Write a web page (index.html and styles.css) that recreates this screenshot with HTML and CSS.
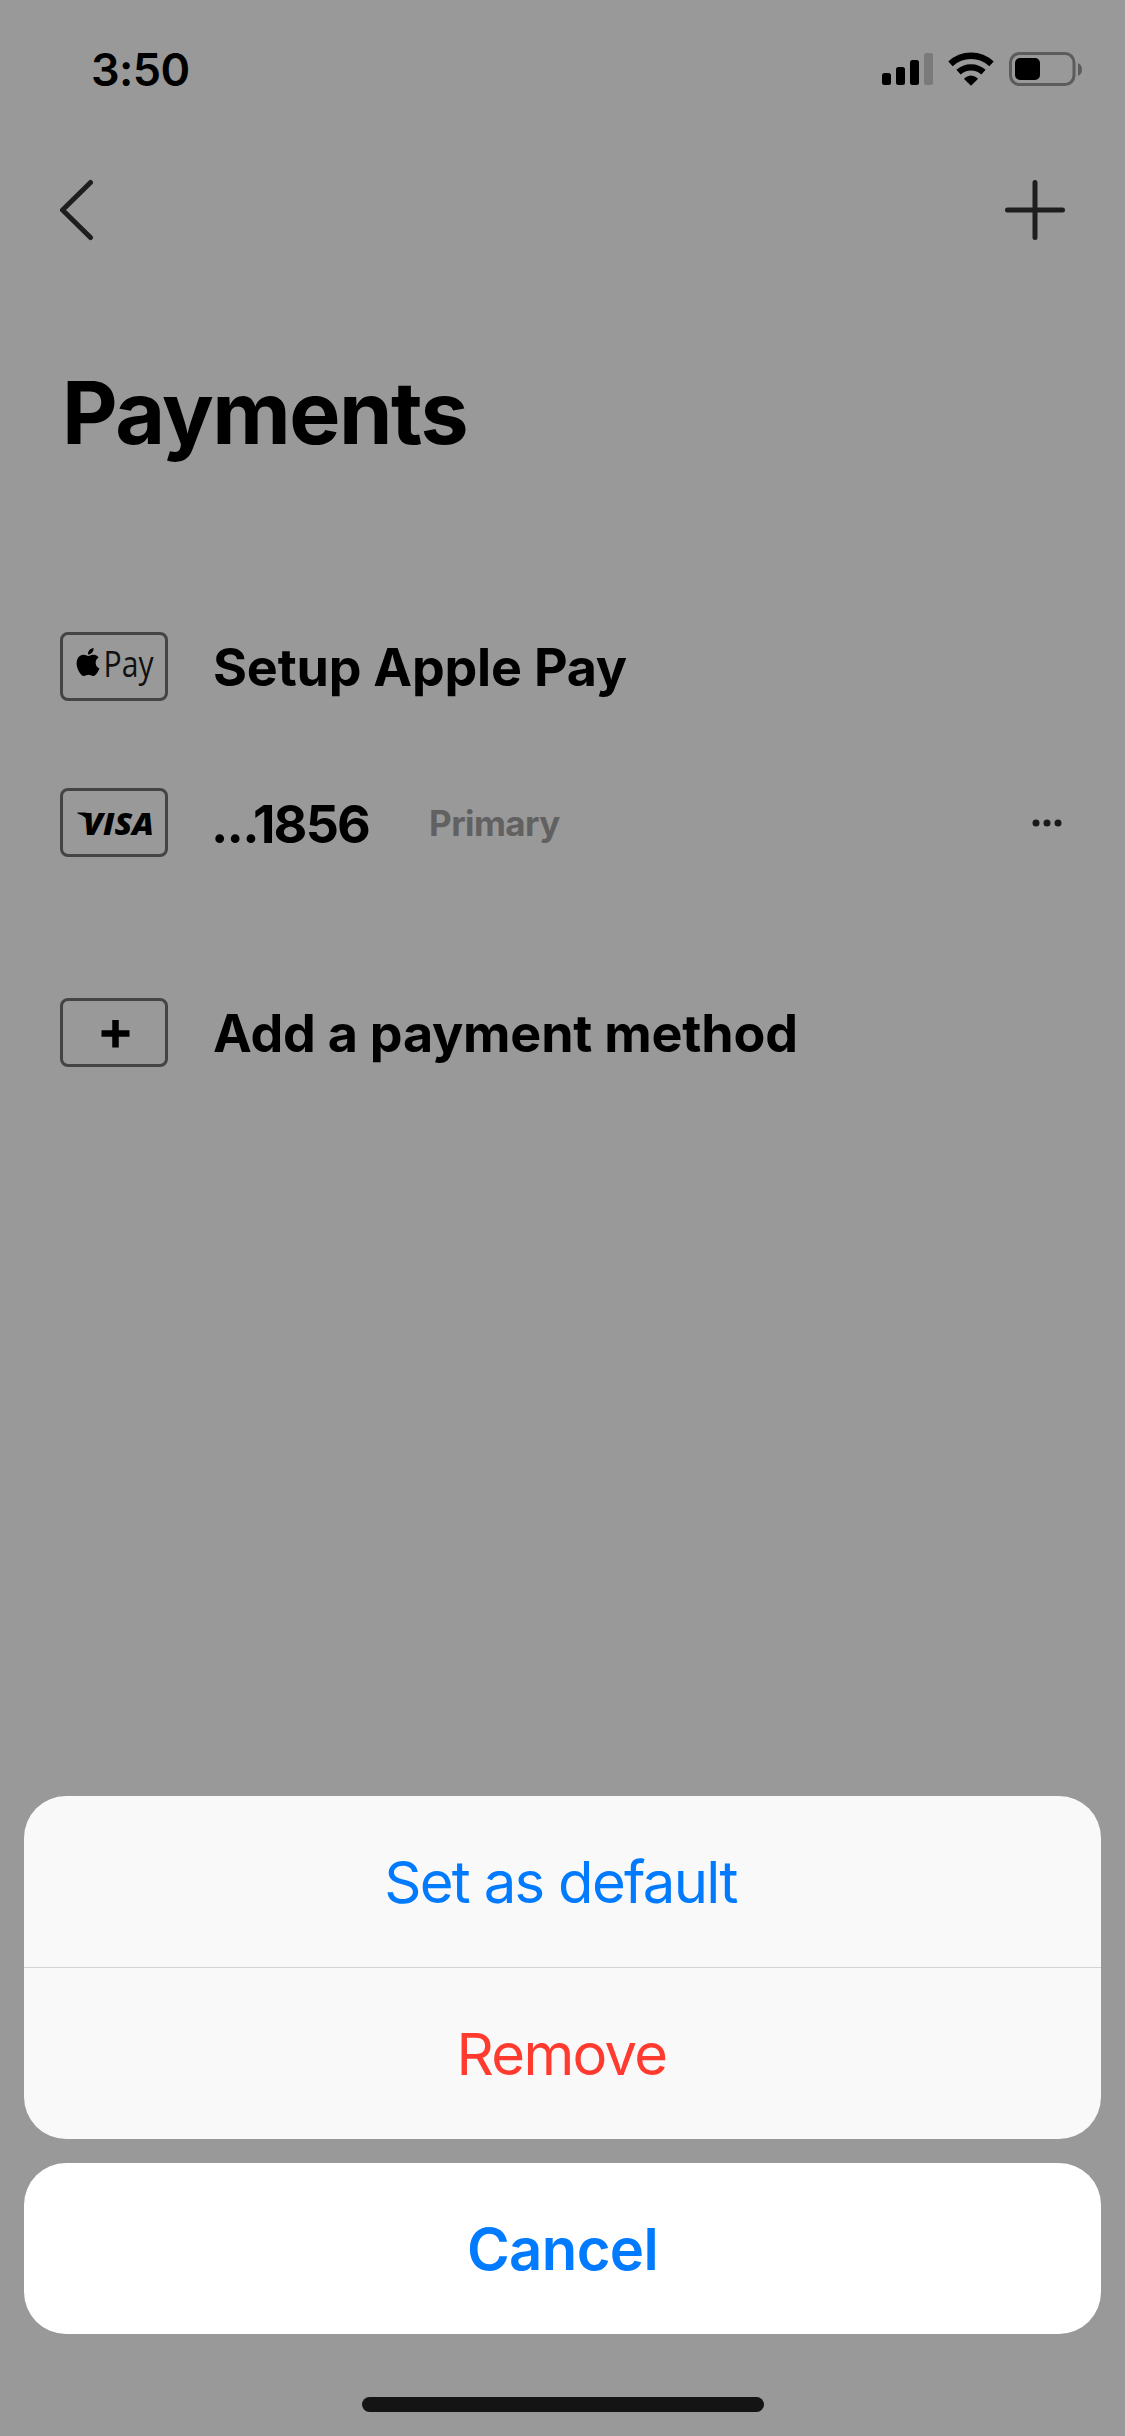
FILE: index.html
```html
<!DOCTYPE html>
<html lang="en">
<head>
<meta charset="utf-8">
<title>Payments</title>
<link rel="stylesheet" href="styles.css">
</head>
<body>
<div class="screen">
  <header class="status">
    <span class="time">3:50</span>
    <svg class="indicators" width="202" height="36" viewBox="0 0 202 36">
      <rect x="1" y="22" width="9" height="12" rx="2.5"/>
      <rect x="15" y="16" width="9" height="18" rx="2.5"/>
      <rect x="29" y="9" width="9" height="25" rx="2.5"/>
      <rect x="43" y="2" width="9" height="32" rx="2.5" fill="#7a7a7a"/>
      <g fill="none" stroke="#000" stroke-width="6.4">
        <path d="M69.500 12.800A30 30 0 0 1 110.500 12.800"/>
        <path d="M77.500 21.200A18.500 18.500 0 0 1 102.500 21.200"/>
      </g>
      <path d="M83.400 27.200Q90 21.600 96.600 27.200Q97 28 96.400 28.600L90 34.800L83.600 28.600Q83 28 83.400 27.200Z"/>
      <rect x="129.500" y="2.500" width="63.500" height="31" rx="9" fill="none" stroke="#5c5c5c" stroke-width="3"/>
      <rect x="134" y="7" width="25" height="22" rx="5"/>
      <path d="M197 12q4 2 4 6.500t-4 6.500z" fill="#5c5c5c"/>
    </svg>
  </header>
  <nav class="nav">
    <svg width="36" height="64" viewBox="0 0 36 64"><path class="line" d="M32.500 4.500L4.500 32L32.500 59.500"/></svg>
    <svg width="64" height="64" viewBox="0 0 64 64"><path class="line" d="M32 4.500V59.500M4.500 32H59.500"/></svg>
  </nav>
  <main class="content">
    <h1 class="title">Payments</h1>
    <ul class="methods">
      <li class="row">
        <svg class="card" width="108" height="69" viewBox="0 0 108 69">
          <rect class="edge" x="1.500" y="1.500" width="105" height="66" rx="6.500"/>
          <path transform="translate(14 16) scale(1.167)" d="M12.152 6.896c-.948 0-2.415-1.078-3.960-1.040-2.040.027-3.910 1.183-4.961 3.014-2.117 3.675-.546 9.103 1.519 12.090 1.013 1.454 2.208 3.090 3.792 3.039 1.520-.065 2.090-.987 3.935-.987 1.831 0 2.350.987 3.960.948 1.637-.026 2.676-1.480 3.676-2.948 1.156-1.688 1.636-3.325 1.662-3.415-.039-.013-3.182-1.221-3.220-4.857-.026-3.040 2.480-4.494 2.597-4.559-1.429-2.090-3.623-2.324-4.390-2.376-2-.156-3.675 1.090-4.610 1.090zM15.530 3.830c.843-1.012 1.400-2.427 1.245-3.830-1.207.052-2.662.805-3.532 1.818-.780.896-1.454 2.338-1.273 3.714 1.338.104 2.715-.688 3.559-1.701"/>
          <text class="pay" x="43.500" y="44.500" textLength="50" lengthAdjust="spacingAndGlyphs">Pay</text>
        </svg>
        <span class="label label-apple">Setup Apple Pay</span>
      </li>
      <li class="row">
        <svg class="card" width="108" height="69" viewBox="0 0 108 69">
          <rect class="edge" x="1.500" y="1.500" width="105" height="66" rx="6.500"/>
          <path d="M17.500 24.500H26L32 39Q27 28 17.500 25.500Z"/>
          <text class="visa" x="23" y="46.500" textLength="71" lengthAdjust="spacingAndGlyphs">VISA</text>
        </svg>
        <span class="label label-number">...1856</span>
        <span class="tag">Primary</span>
        <svg class="more" width="30" height="8" viewBox="0 0 30 8"><circle cx="4" cy="4" r="3.500"/><circle cx="15" cy="4" r="3.500"/><circle cx="26" cy="4" r="3.500"/></svg>
      </li>
      <li class="row row-add">
        <svg class="card" width="108" height="69" viewBox="0 0 108 69">
          <rect class="edge" x="1.500" y="1.500" width="105" height="66" rx="6.500"/>
          <path d="M55.500 22V49.500M41.500 35.500H69.500" stroke="#000" stroke-width="6.500"/>
        </svg>
        <span class="label label-add">Add a payment method</span>
      </li>
    </ul>
  </main>
  <div class="sheet">
    <div class="group">
      <button class="action set">Set as default</button>
      <button class="action remove">Remove</button>
    </div>
    <button class="action cancel">Cancel</button>
    <div class="home"></div>
  </div>
</div>
</body>
</html>
```
FILE: styles.css
```css
* { box-sizing: border-box; }
body { margin: 0; background: #999; }
.screen {
  position: relative;
  width: 1125px;
  height: 2436px;
  overflow: hidden;
  background: #999;
  color: #000;
  font-family: Inter, "Liberation Sans", sans-serif;
}
svg { display: block; flex: none; }
.status {
  display: flex;
  justify-content: space-between;
  align-items: flex-start;
  height: 178px;
  padding: 51px 42px 0 91px;
}
.time { font-size: 45px; line-height: 37px; font-weight: 600; letter-spacing: -0.6px; }
.nav {
  display: flex;
  justify-content: space-between;
  height: 64px;
  padding: 0 58px;
}
.line { fill: none; stroke: #1e1e1e; stroke-width: 5; stroke-linecap: round; stroke-linejoin: round; }
.content { padding: 122px 60px 0; }
.title { margin: 0; padding-left: 2px; font-size: 86px; line-height: 98px; font-weight: 700; letter-spacing: -1.5px; white-space: nowrap; }
.methods { list-style: none; margin: 170px 0 0; padding: 0; }
.row { display: flex; align-items: center; height: 69px; margin-bottom: 87px; }
.row-add { margin-top: 141px; }
.edge { fill: none; stroke: #444; stroke-width: 3; }
.pay { font: 400 36px "Open Sans", sans-serif; fill: #111; }
.visa { font: italic 800 30px "Open Sans", sans-serif; }
.label { margin-left: 45px; padding-top: 2px; font-size: 52px; line-height: 69px; font-weight: 700; letter-spacing: -0.2px; white-space: nowrap; }
.label-number { margin-left: 43px; padding-top: 3px; letter-spacing: -1.8px; }
.tag { margin-left: 60px; padding-top: 1px; font-size: 35px; line-height: 69px; font-weight: 700; letter-spacing: -0.6px; color: #616161; }
.more { margin: 0 3px 0 auto; fill: #1a1a1a; }
.sheet { position: absolute; left: 24px; right: 24px; bottom: 24px; display: flex; flex-direction: column; }
.group { display: flex; flex-direction: column; height: 343px; border-radius: 42px; overflow: hidden; background: #f9f9f9; }
.action {
  flex: 1;
  border: 0;
  padding: 2px 2px 0 0;
  background: none;
  font-family: inherit;
  font-size: 58px;
  line-height: 169px;
  letter-spacing: -1.7px;
  text-align: center;
  color: #007aff;
}
.set { flex: 0 0 172px; padding-right: 4px; border-bottom: 1px solid #d3d3d5; }
.remove { color: #ff3b30; }
.cancel { flex: none; height: 171px; margin-top: 24px; padding-right: 0; border-radius: 42px; background: #fff; font-weight: 600; letter-spacing: -0.6px; }
.home { align-self: center; width: 402px; height: 15px; margin-top: 63px; border-radius: 8px; background: #141414; }
```
